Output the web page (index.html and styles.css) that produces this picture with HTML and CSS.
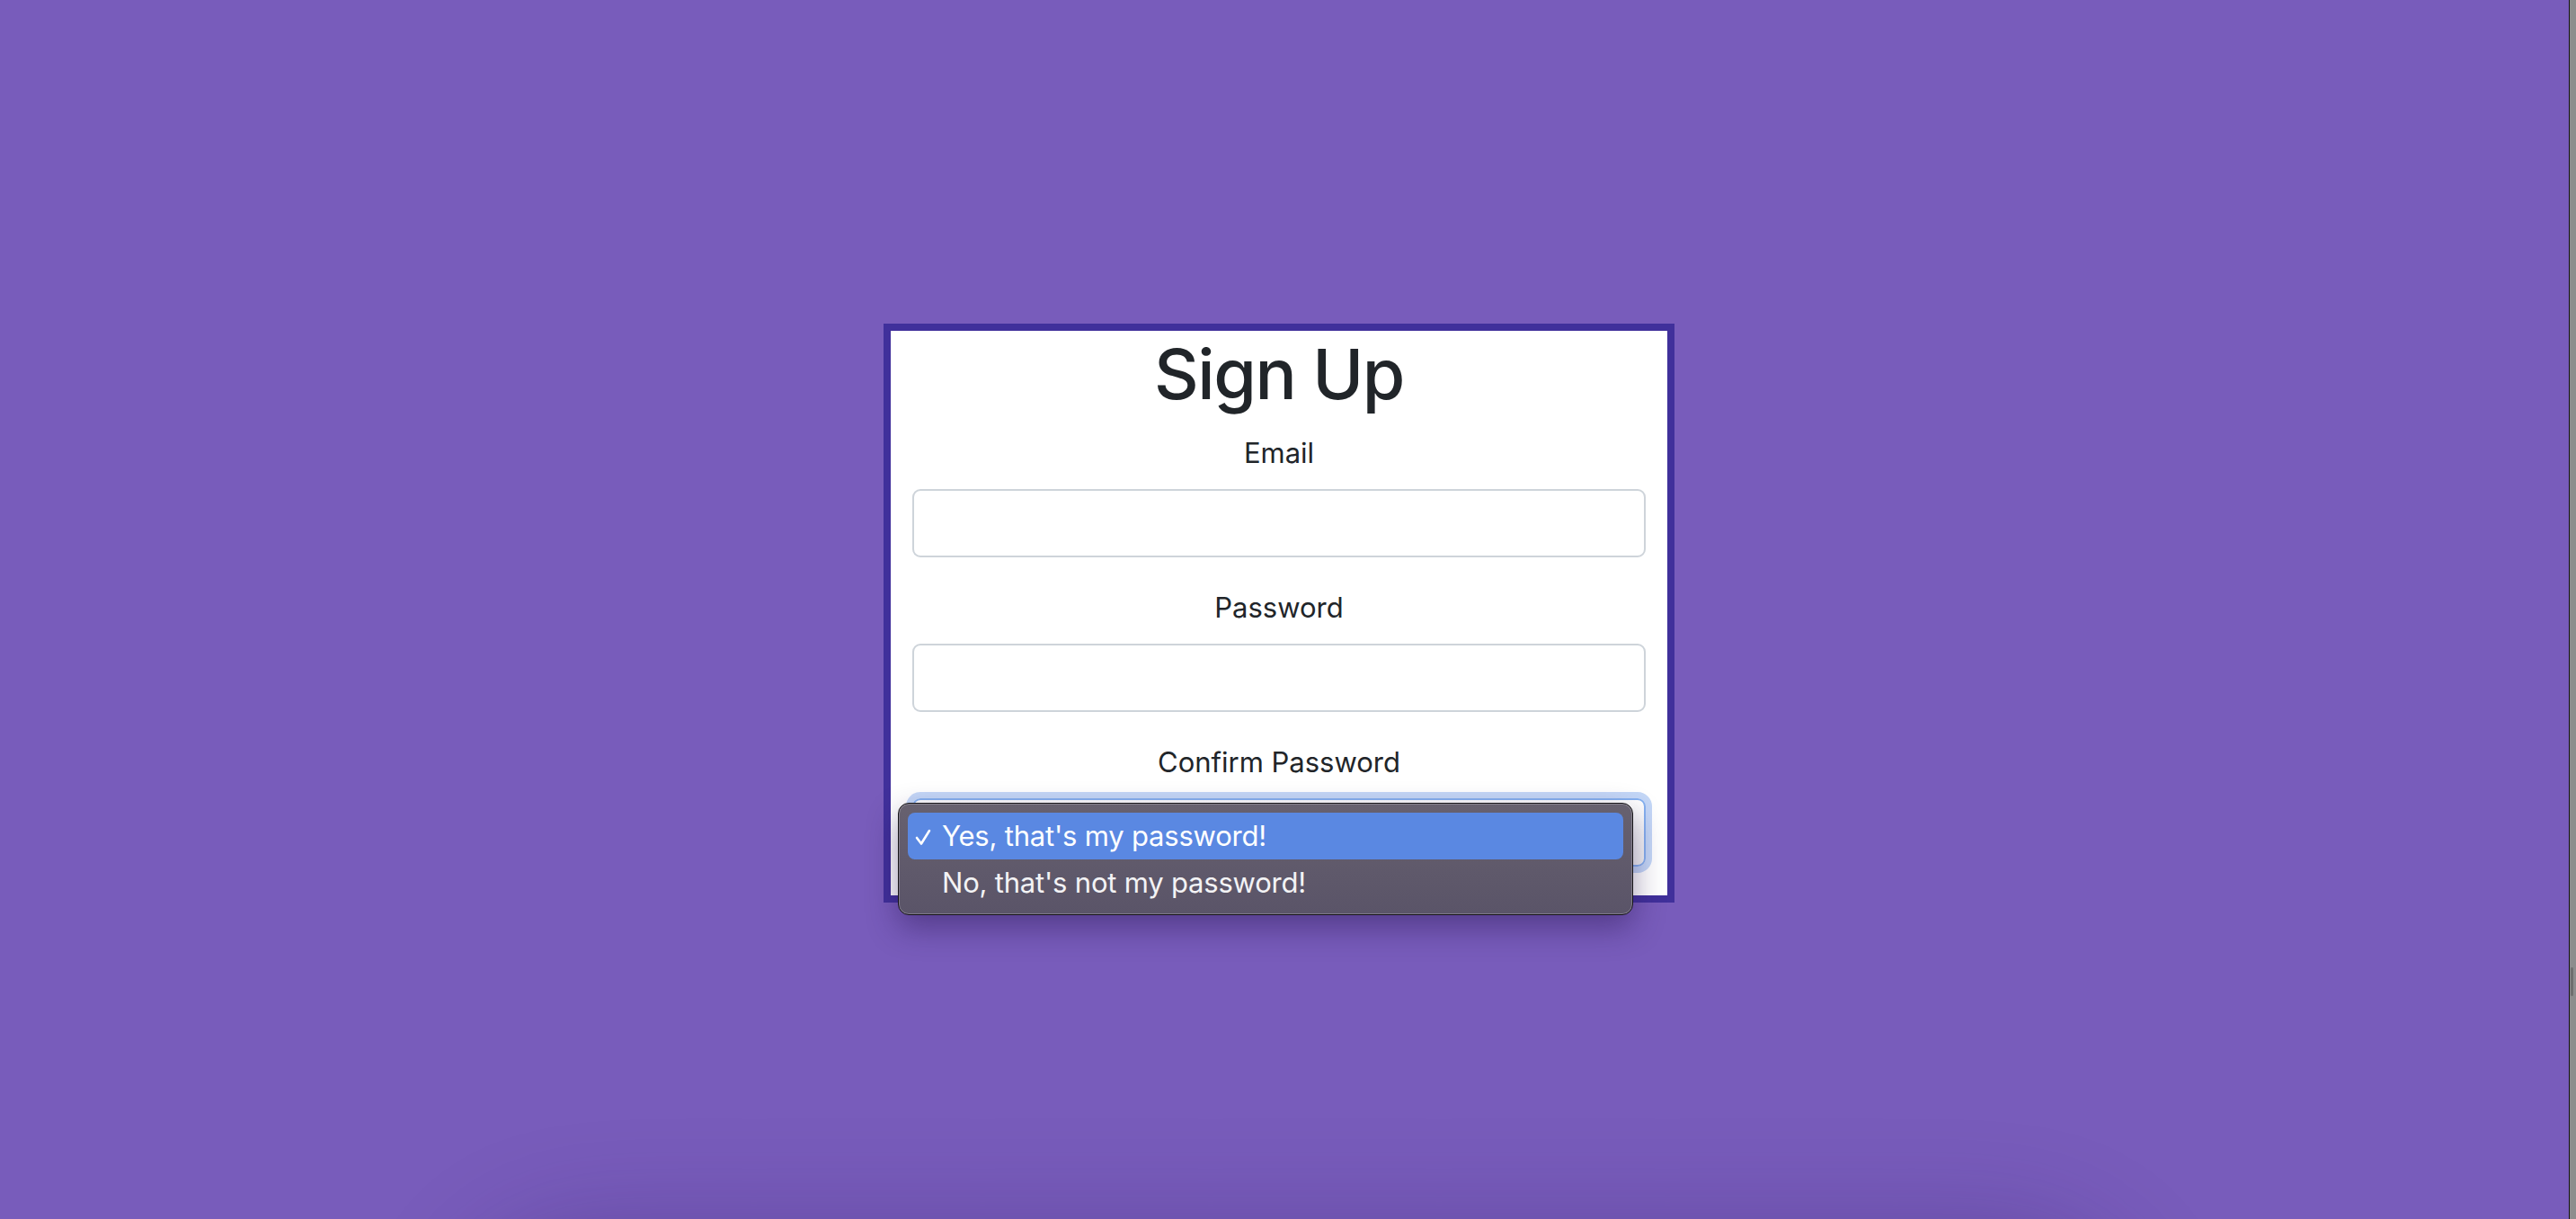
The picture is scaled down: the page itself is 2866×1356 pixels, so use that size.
FILE: index.html
```html
<!DOCTYPE html>
<html lang="en">
<head>
<meta charset="utf-8">
<title>Sign Up</title>
<link rel="stylesheet" href="styles.css">
</head>
<body>
<div class="page">
  <form class="card">
    <h1 class="title">Sign Up</h1>
    <div class="group">
      <label class="label">Email</label>
      <div class="field"></div>
    </div>
    <div class="group">
      <label class="label">Password</label>
      <div class="field"></div>
    </div>
    <div class="group group-select">
      <label class="label">Confirm Password</label>
      <div class="field field-focus"></div>
      <div class="menu">
        <div class="item item-active">
          <svg class="check" viewBox="0 0 18 20" width="18" height="20"><polyline points="2,11 7,17.5 16,3" fill="none" stroke="#fff" stroke-width="2.6" stroke-linecap="round" stroke-linejoin="round"/></svg>
          <span>Yes, that's my password!</span>
        </div>
        <div class="item">
          <span class="spacer"></span>
          <span>No, that's not my password!</span>
        </div>
      </div>
    </div>
  </form>
</div>
<div class="bottom-shadow"></div>
<div class="scrollbar"><div class="thumb"></div></div>
</body>
</html>
```
FILE: styles.css
```css
html, body {
  margin: 0;
  padding: 0;
  height: 100%;
  overflow: hidden;
}
body {
  background: #785cbb;
  font-family: Inter, "Noto Sans", "Liberation Sans", sans-serif;
  color: #212529;
}
.page {
  box-sizing: border-box;
  min-height: 100vh;
  display: flex;
  justify-content: center;
  align-items: flex-start;
  padding-top: 360px;
  padding-right: 20px;
}
.card {
  box-sizing: border-box;
  width: 880px;
  background: #ffffff;
  border: 8px solid #40309b;
  padding: 0 24px;
  text-align: center;
}
.title {
  margin: 0 0 16px;
  font-size: 77px;
  font-weight: 500;
  line-height: 96px;
  letter-spacing: -1.5px;
  color: #212529;
}
.group {
  margin-bottom: 32px;
}
.group-select {
  position: relative;
}
.label {
  display: block;
  font-size: 31px;
  line-height: 48px;
  margin-bottom: 16px;
  color: #212529;
}
.field {
  box-sizing: border-box;
  height: 76px;
  border: 2px solid #ced4da;
  border-radius: 9px;
  background: #fff;
}
.field-focus {
  border-color: #86b1f0;
  background: linear-gradient(#ffffff, #f3f3f3);
  box-shadow: 0 0 0 7px rgba(100, 150, 235, 0.38);
}
.menu {
  position: absolute;
  left: -16px;
  top: 69px;
  box-sizing: border-box;
  width: 818px;
  height: 125px;
  padding: 10px;
  border: 1px solid #161418;
  border-radius: 12px;
  background: linear-gradient(#67616f, #5a5468);
  box-shadow: inset 0 0 0 1px rgba(255, 255, 255, 0.22), 0 14px 34px rgba(40, 20, 80, 0.45);
  text-align: left;
}
.item {
  display: flex;
  align-items: center;
  height: 52px;
  border-radius: 8px;
  font-size: 31px;
  color: #f3f3f5;
  letter-spacing: -0.2px;
  padding-bottom: 2px;
  box-sizing: border-box;
}
.item-active {
  background: #5a88e2;
  color: #ffffff;
}
.check {
  width: 18px;
  height: 20px;
  margin: 4px 12px 0 8px;
  flex: none;
}
.spacer {
  width: 38px;
  flex: none;
}
.bottom-shadow {
  position: fixed;
  left: 560px;
  right: 540px;
  top: 1420px;
  height: 200px;
  border-radius: 200px;
  box-shadow: 0 0 120px 50px rgba(50, 25, 100, 0.3);
}
.scrollbar {
  position: fixed;
  top: 0;
  right: 0;
  bottom: 0;
  width: 7px;
  border-left: 1px solid #111;
  background: #8d8d8d;
}
.thumb {
  position: absolute;
  left: 1px;
  top: 1076px;
  width: 3px;
  height: 32px;
  border-radius: 2px;
  background: #6e6e6e;
}
```
